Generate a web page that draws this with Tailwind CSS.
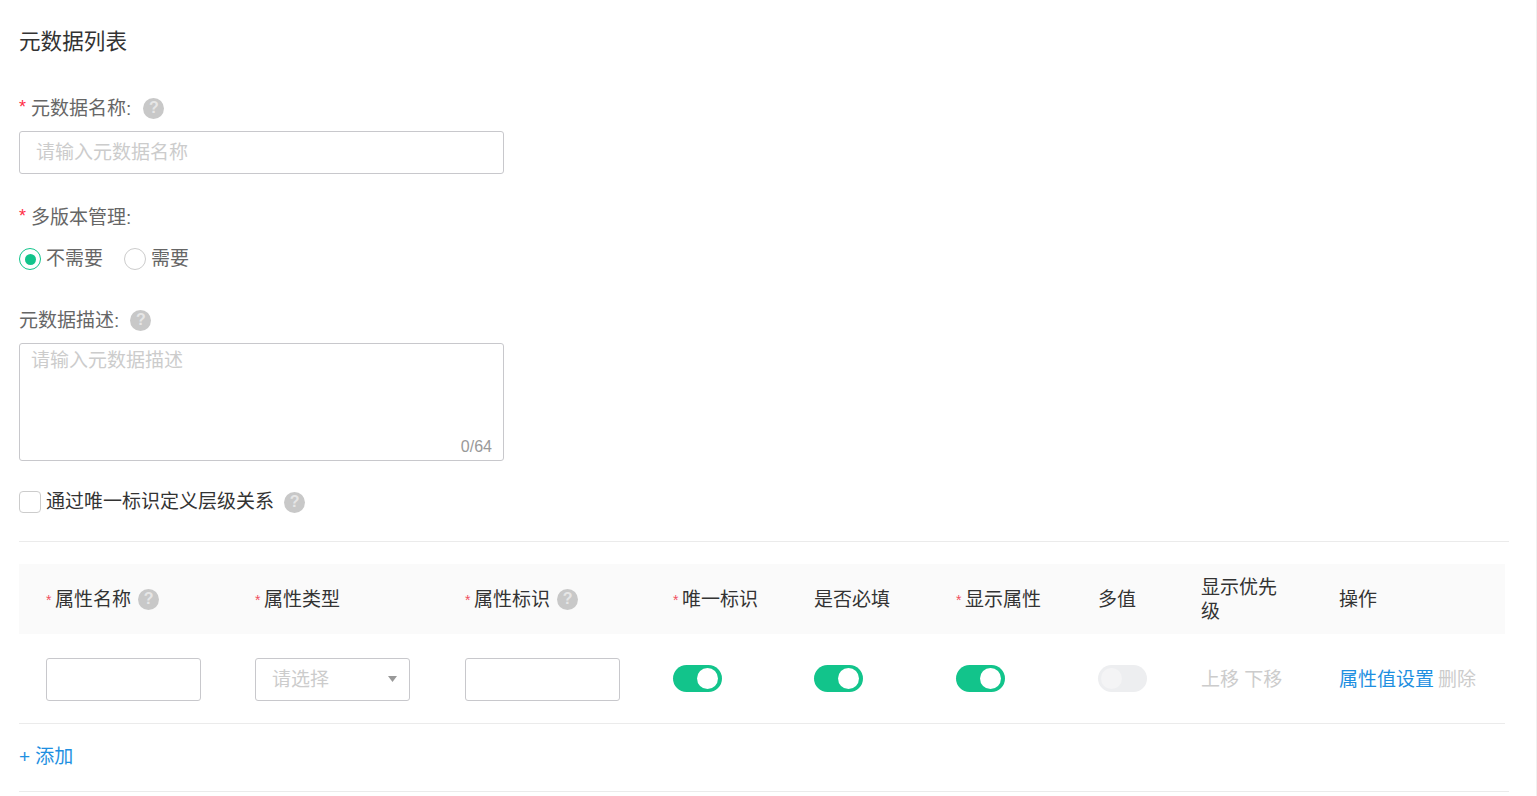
<!DOCTYPE html>
<html lang="zh-CN">
<head>
  <meta charset="utf-8"/>
  <title>元数据列表</title>
  <script src="https://cdn.jsdelivr.net/npm/@tailwindcss/browser@4"></script>
</head>
<body class="bg-white overflow-hidden font-['Liberation_Sans','Noto_Sans_CJK_SC',sans-serif] text-[19px] leading-[26px] text-[#333]">
  <div class="h-[796px] pl-[19px] pr-[27px] pt-[28px] border-r border-[#f0f0f0]">
    <h1 class="text-[21.6px] leading-[28px] font-normal text-[#333]">元数据列表</h1>

    <!-- 基本信息 -->
    <div class="mt-[39px] flex items-center h-[26px] text-[#666]">
      <span class="text-[#ff2d46] text-[18px] w-[12px] -mt-[3px]">*</span>
      <span class="mt-[2px]">元数据名称:</span>
      <span class="ml-[12px] w-[21px] h-[21px] rounded-full bg-[#c8c8c8] text-[#e6e6e6] text-[16px] font-bold flex items-center justify-center">?</span>
    </div>
    <div class="mt-[10px] w-[485px] h-[43px] border border-[#c8c8cc] rounded-[3px] pl-[16px] flex items-center text-[#ccc]">请输入元数据名称</div>

    <div class="mt-[30px] flex items-center h-[26px] text-[#666]">
      <span class="text-[#ff2d46] text-[18px] w-[12px] -mt-[3px]">*</span>
      <span class="mt-[2px]">多版本管理:</span>
    </div>
    <div class="mt-[16px] flex items-center h-[26px] text-[#666]">
      <span class="w-[22px] h-[22px] rounded-full border border-[#12c48b] flex items-center justify-center">
        <span class="w-[11px] h-[11px] rounded-full bg-[#12c48b]"></span>
      </span>
      <span class="ml-[5px]">不需要</span>
      <span class="ml-[21px] w-[22px] h-[22px] rounded-full border border-[#ccc]"></span>
      <span class="ml-[5px]">需要</span>
    </div>

    <div class="mt-[35px] flex items-center h-[26px] text-[#666]">
      <span class="mt-[2px]">元数据描述:</span>
      <span class="ml-[11px] w-[21px] h-[21px] rounded-full bg-[#c8c8c8] text-[#e6e6e6] text-[16px] font-bold flex items-center justify-center">?</span>
    </div>
    <div class="mt-[10px] w-[485px] h-[118px] border border-[#c8c8cc] rounded-[3px] px-[11px] pt-[3px] text-[#ccc] flex flex-col justify-between">
      <span class="mt-[1px]">请输入元数据描述</span>
      <span class="self-end text-[16px] leading-[26px] text-[#999]">0/64</span>
    </div>

    <div class="mt-[28px] flex items-center h-[26px]">
      <span class="w-[22px] h-[22px] rounded-[4px] border border-[#ccc]"></span>
      <span class="ml-[5px]">通过唯一标识定义层级关系</span>
      <span class="ml-[10px] w-[21px] h-[21px] rounded-full bg-[#c8c8c8] text-[#e6e6e6] text-[16px] font-bold flex items-center justify-center">?</span>
    </div>

    <div class="mt-[26px] border-t border-[#ebebeb]"></div>

    <!-- 属性表格 -->
    <div class="mt-[22px] w-[1486px]">
      <div class="h-[70px] bg-[#fafafa] pl-[27px] pt-[2px] grid grid-cols-[209px_210px_208px_141px_142px_142px_103px_138px_1fr] items-center">
        <div class="flex items-center"><span class="text-[#f0505f] text-[14px] w-[9px]">*</span>属性名称<span class="ml-[7px] -mt-[2px] w-[21px] h-[21px] rounded-full bg-[#c8c8c8] text-[#e6e6e6] text-[16px] font-bold flex items-center justify-center">?</span></div>
        <div class="flex items-center"><span class="text-[#f0505f] text-[14px] w-[9px]">*</span>属性类型</div>
        <div class="flex items-center"><span class="text-[#f0505f] text-[14px] w-[9px]">*</span>属性标识<span class="ml-[7px] -mt-[2px] w-[21px] h-[21px] rounded-full bg-[#c8c8c8] text-[#e6e6e6] text-[16px] font-bold flex items-center justify-center">?</span></div>
        <div class="flex items-center"><span class="text-[#f0505f] text-[14px] w-[9px]">*</span>唯一标识</div>
        <div>是否必填</div>
        <div class="flex items-center"><span class="text-[#f0505f] text-[14px] w-[9px]">*</span>显示属性</div>
        <div>多值</div>
        <div class="w-[80px] leading-[24px]">显示优先级</div>
        <div>操作</div>
      </div>
      <div class="h-[90px] border-b border-[#ebebeb] pl-[27px] grid grid-cols-[209px_210px_208px_141px_142px_142px_103px_138px_1fr] items-center">
        <div class="mt-[2px] w-[155px] h-[43px] border border-[#c8c8cc] rounded-[3px]"></div>
        <div class="mt-[2px] w-[155px] h-[43px] border border-[#c8c8cc] rounded-[3px] pl-[16px] pr-[12px] flex items-center justify-between text-[#ccc]">
          请选择
          <svg class="w-[9px] h-[6px] -mt-[1px]" viewBox="0 0 9 6"><path d="M0 0h9L4.5 6z" fill="#999"/></svg>
        </div>
        <div class="mt-[2px] w-[155px] h-[43px] border border-[#c8c8cc] rounded-[3px]"></div>
        <div class="w-[49px] h-[27px] rounded-full bg-[#12c48b] flex items-center justify-end pr-[4px]"><span class="w-[21px] h-[21px] rounded-full bg-white"></span></div>
        <div class="w-[49px] h-[27px] rounded-full bg-[#12c48b] flex items-center justify-end pr-[4px]"><span class="w-[21px] h-[21px] rounded-full bg-white"></span></div>
        <div class="w-[49px] h-[27px] rounded-full bg-[#12c48b] flex items-center justify-end pr-[4px]"><span class="w-[21px] h-[21px] rounded-full bg-white"></span></div>
        <div class="w-[49px] h-[27px] rounded-full bg-[#edeef0] flex items-center pl-[3px]"><span class="w-[21px] h-[21px] rounded-full bg-[#f4f4f5]"></span></div>
        <div class="mt-[2px] text-[#ccc] whitespace-nowrap">上移 下移</div>
        <div class="mt-[2px] flex gap-[4px] whitespace-nowrap"><span class="text-[#1e8fe1]">属性值设置</span><span class="text-[#ccc]">删除</span></div>
      </div>
    </div>

    <div class="mt-[20px] h-[26px] text-[#1e8fe1]">+ 添加</div>
    <div class="mt-[21px] border-t border-[#ebebeb]"></div>
  </div>
</body>
</html>
